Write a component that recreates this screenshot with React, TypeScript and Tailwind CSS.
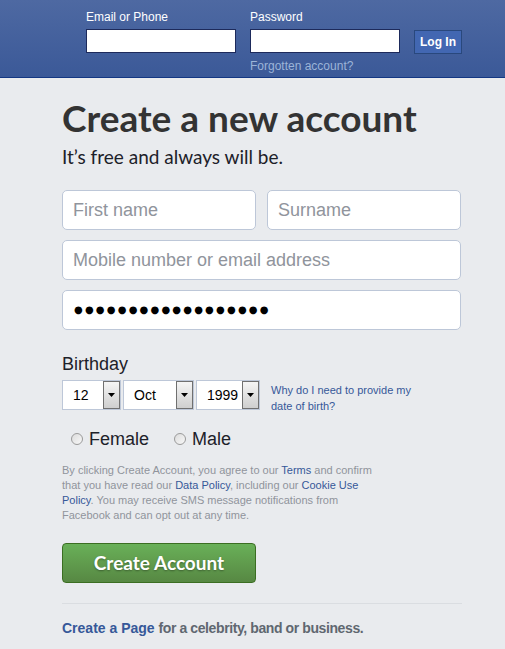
import React from 'react';

const SANS = "font-['Liberation_Sans',Arial,sans-serif]";
const HEAD = "font-['Lato','Open_Sans',sans-serif]";

function Select({ value, width }: { value: string; width: string }) {
  return (
    <div className={`flex h-[30px] items-stretch border border-[#bdc7d8] bg-white ${width}`}>
      <span className="flex-1 pl-[10px] text-[14px] leading-[28px] text-black">{value}</span>
      <span className="flex w-[17px] items-center justify-center border border-[#707070] bg-gradient-to-b from-[#f5f5f5] to-[#cfcfcf]">
        <svg width="7" height="4" viewBox="0 0 7 4">
          <path d="M0 0h7L3.5 4z" fill="#000" />
        </svg>
      </span>
    </div>
  );
}

function Radio({ label }: { label: string }) {
  return (
    <label className="flex items-center gap-[6px]">
      <span className="h-[12px] w-[12px] rounded-full border border-[#9a9a9a] bg-gradient-to-br from-[#dcdcdc] to-[#f8f8f8]" />
      <span className="text-[18px] leading-[22px] text-[#1d2129]">{label}</span>
    </label>
  );
}

export default function App() {
  return (
    <div className={`min-h-screen bg-[#e9ebee] ${SANS}`}>
      {/* top bar with login */}
      <header className="h-[78px] border-b border-[#133783] bg-gradient-to-b from-[#4e69a2] to-[#3b5998]">
        <div className="flex gap-[14px] pl-[86px] pt-[9px]">
          <div className="flex w-[150px] flex-col">
            <label className="h-[20px] text-[12px] leading-[16px] text-white">Email or Phone</label>
            <input className="h-[24px] border border-[#1d2a5b] bg-white outline-none" />
          </div>
          <div className="flex w-[150px] flex-col">
            <label className="h-[20px] text-[12px] leading-[16px] text-white">Password</label>
            <input type="password" className="h-[24px] border border-[#1d2a5b] bg-white outline-none" />
            <a className="mt-[5px] text-[12px] leading-[16px] text-[#9cb4d8]">Forgotten account?</a>
          </div>
          <div className="pt-[20px]">
            <button className="h-[24px] w-[48px] border border-[#29487d] bg-[#4267b2] text-[12px] font-bold text-white">
              Log In
            </button>
          </div>
        </div>
      </header>

      <main className="w-[462px] pl-[62px] pt-[17px]">
        <h1 className={`${HEAD} text-[37px] font-bold leading-[46px] text-[#333]`}>Create a new account</h1>
        <p className={`${HEAD} mt-[4px] text-[19px] leading-[24px] text-[#1d2129]`}>It’s free and always will be.</p>

        <div className="mt-[21px] flex flex-col gap-[10px]">
          <div className="flex gap-[11px]">
            <input
              placeholder="First name"
              className="h-[40px] w-[194px] rounded-[5px] border border-[#bdc7d8] bg-white px-[10px] text-[18px] placeholder-[#90949c] outline-none"
            />
            <input
              placeholder="Surname"
              className="h-[40px] w-[194px] rounded-[5px] border border-[#bdc7d8] bg-white px-[10px] text-[18px] placeholder-[#90949c] outline-none"
            />
          </div>
          <input
            placeholder="Mobile number or email address"
            className="h-[40px] w-[399px] rounded-[5px] border border-[#bdc7d8] bg-white px-[10px] text-[18px] placeholder-[#90949c] outline-none"
          />
          <div className="flex h-[40px] w-[399px] items-center rounded-[5px] border border-[#bdc7d8] bg-white px-[11px]">
            <span className="font-['DejaVu_Sans',sans-serif] text-[10px] leading-none tracking-[2.2px] text-black">
              ●●●●●●●●●●●●●●●●●●
            </span>
          </div>
        </div>

        <div className="mt-[22px] text-[18px] leading-[24px] text-[#1d2129]">Birthday</div>
        <div className="mt-[4px] flex items-start">
          <div className="flex gap-[2px]">
            <Select value="12" width="w-[59px]" />
            <Select value="Oct" width="w-[71px]" />
            <Select value="1999" width="w-[64px]" />
          </div>
          <a className="ml-[11px] mt-[2px] w-[150px] text-[11px] leading-[16px] text-[#365899]">
            Why do I need to provide my date of birth?
          </a>
        </div>

        <div className="mt-[14px] flex gap-[25px] pl-[9px]">
          <Radio label="Female" />
          <Radio label="Male" />
        </div>

        <p className="mt-[13px] w-[320px] text-[11px] leading-[15px] text-[#90949c]">
          By clicking Create Account, you agree to our <a className="text-[#365899]">Terms</a> and confirm that you have
          read our <a className="text-[#365899]">Data Policy</a>, including our{' '}
          <a className="text-[#365899]">Cookie Use Policy</a>. You may receive SMS message notifications from Facebook
          and can opt out at any time.
        </p>

        <button
          className={`${HEAD} mt-[20px] h-[40px] w-[194px] rounded-[4px] border border-[#3b6e22] bg-gradient-to-b from-[#69b058] to-[#578843] text-[19px] font-bold text-white [text-shadow:0_1px_2px_rgba(0,0,0,0.35)]`}
        >
          Create Account
        </button>

        <div className="mt-[20px] border-t border-[#dadde1]" />
        <p className="mt-[15px] text-[14px] font-bold leading-[18px] text-[#606770]">
          <a className="text-[#365899]">Create a Page</a>{' '}
          <span className="tracking-[-0.4px]">for a celebrity, band or business.</span>
        </p>
      </main>
    </div>
  );
}
